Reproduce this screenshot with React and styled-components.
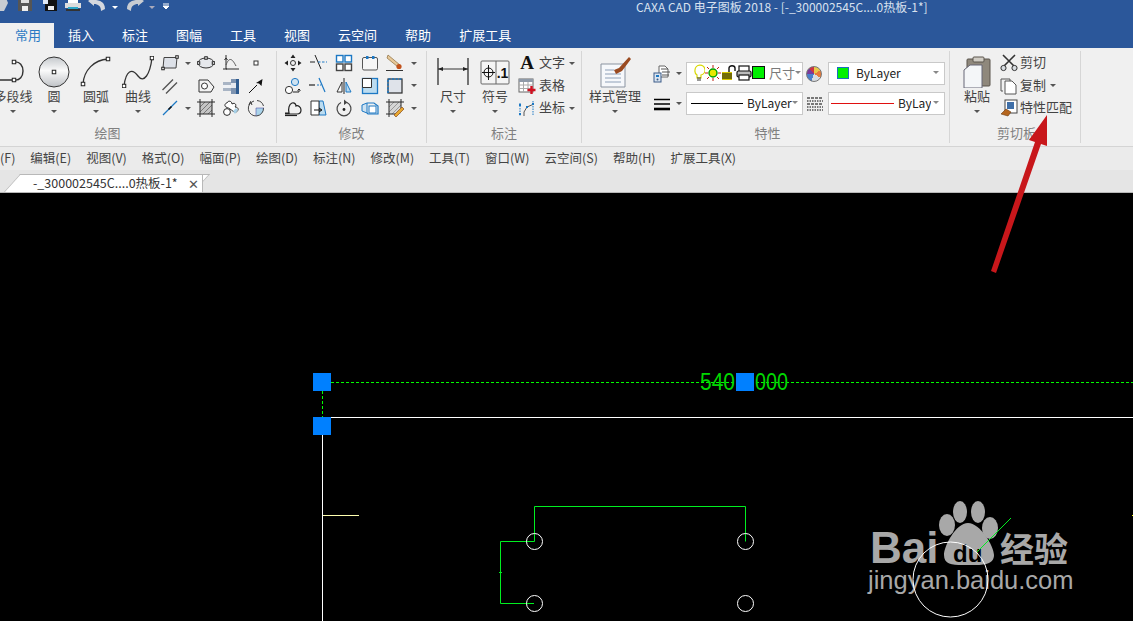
import React from 'react';
import styled, { createGlobalStyle } from 'styled-components';

const GlobalStyle = createGlobalStyle`
  html, body { margin: 0; padding: 0; background: #000; }
  body { font-family: "Noto Sans CJK SC", "Liberation Sans", sans-serif; }
`;

const Window = styled.div`
  position: relative;
  width: 1133px;
  height: 621px;
  overflow: hidden;
  display: flex;
  flex-direction: column;
`;

const TitleBar = styled.div`
  height: 23px;
  flex: none;
  background: #2b579a;
  display: flex;
  align-items: flex-start;
`;

const QuickAccess = styled.div`
  width: 170px;
  height: 11px;
  overflow: hidden;
  display: flex;
  align-items: flex-end;
`;

const QuickIcon = styled.svg`
  flex: none;
  margin-left: ${props => props.$ml}px;
`;

const Title = styled.div`
  margin-left: 466px;
  font-size: 12px;
  line-height: 14px;
  color: #d8e1ef;
  white-space: nowrap;
`;

const TabRow = styled.div`
  height: 25px;
  flex: none;
  background: #2b579a;
  display: flex;
`;

const RibbonTab = styled.div`
  padding: ${props => (props.$active ? '0 13px 0 15px' : '0 14px')};
  font-size: 13px;
  line-height: 23px;
  color: ${props => (props.$active ? '#2b7ac4' : '#fff')};
  background: ${props => (props.$active ? '#f0f0f0' : 'transparent')};
`;

const Ribbon = styled.div`
  height: 99px;
  flex: none;
  box-sizing: border-box;
  padding-top: 3px;
  background: #f0f0f0;
  border-bottom: 1px solid #d4d4d4;
  display: flex;
  align-items: flex-start;
`;

const Group = styled.div`
  flex: none;
  width: ${props => props.$w}px;
  margin-left: ${props => props.$ml || 0}px;
  height: 92px;
  box-sizing: border-box;
  border-right: 1px solid #d6d6d6;
  display: flex;
  flex-direction: column;
`;

const GroupBody = styled.div`
  height: 74px;
  display: flex;
  align-items: flex-start;
  padding-left: ${props => props.$pl || 0}px;
`;

const GroupLabel = styled.div`
  height: 16px;
  font-size: 13px;
  line-height: 16px;
  color: #808080;
  text-align: center;
  padding-left: ${props => props.$pl || 0}px;
  padding-right: ${props => props.$pr || 0}px;
`;

const BigButton = styled.div`
  flex: none;
  width: ${props => props.$w}px;
  padding-top: 5px;
  display: flex;
  flex-direction: column;
  align-items: center;
  overflow: visible;
`;

const BigIcon = styled.svg`
  display: block;
  flex: none;
`;

const BigLabel = styled.div`
  margin-top: 0;
  font-size: 13px;
  line-height: 16px;
  color: #444;
  white-space: nowrap;
`;

const Caret = styled.span`
  flex: none;
  display: block;
  width: 0;
  height: 0;
  border-left: 3px solid transparent;
  border-right: 3px solid transparent;
  border-top: 3px solid #555;
  margin-top: ${props => props.$mt || 0}px;
  margin-left: ${props => props.$ml || 0}px;
`;

const IconGrid = styled.div`
  flex: none;
  margin-top: 1px;
  display: grid;
  grid-template-columns: ${props => props.$cols};
  grid-auto-rows: 22.5px;
`;

const IconCell = styled.div`
  display: flex;
  align-items: center;
  justify-content: ${props => (props.$start ? 'flex-start' : 'center')};
  padding-left: ${props => props.$pl || 0}px;
`;

const SmallIcon = styled.svg`
  display: block;
  flex: none;
`;

const ActionList = styled.div`
  flex: none;
  margin-top: 1px;
  margin-left: ${props => props.$ml || 0}px;
  display: flex;
  flex-direction: column;
`;

const ActionRow = styled.div`
  height: 22.5px;
  display: flex;
  align-items: center;
  font-size: 13px;
  color: #444;
  white-space: nowrap;
`;

const ActionText = styled.span`
  margin-left: ${props => props.$ml || 1}px;
  margin-bottom: 3px;
`;

const PropRows = styled.div`
  flex: none;
  margin-top: 11px;
  margin-left: 13px;
  display: flex;
  flex-direction: column;
  gap: 7px;
`;

const PropRow = styled.div`
  height: 23px;
  display: flex;
  align-items: center;
`;

const Combo = styled.div`
  flex: none;
  width: 117px;
  height: 23px;
  box-sizing: border-box;
  border: 1px solid #c9c9c9;
  background: #fff;
  display: flex;
  align-items: center;
  padding: 0 4px 2px;
  padding-left: ${props => props.$pl || 4}px;
  font-size: 12px;
  color: #222;
  position: relative;
`;

const ComboCaret = styled(Caret)`
  margin-left: auto;
  margin-right: 1px;
  border-top-color: #888;
`;

const RowCaret = styled(Caret)`
  margin-left: 5px;
  margin-right: 4px;
`;

const LineSample = styled.span`
  flex: none;
  height: 1px;
  width: ${props => props.$w}px;
  background: ${props => props.$color};
  margin-right: 4px;
  margin-top: 2px;
`;

const ClippedText = styled.span`
  flex: none;
  display: block;
  width: ${props => props.$w}px;
  overflow: hidden;
  white-space: nowrap;
`;

const LayerName = styled(ClippedText)`
  margin-left: 4px;
  color: #7a7a7a;
  font-size: 13px;
`;

const ColorSwatch = styled.span`
  flex: none;
  width: 12px;
  height: 12px;
  background: #00f000;
  border: 1px solid #1a6fc0;
  box-sizing: border-box;
  margin: 0 7px 0 4px;
`;

const Wheel = styled.div`
  flex: none;
  width: 16px;
  height: 16px;
  margin: 0 6px 0 3px;
  border-radius: 50%;
  border: 1px solid #777;
  box-sizing: border-box;
  background: conic-gradient(#e8c84a 0 60deg, #e87a3a 60deg 120deg, #d8dce0 120deg 200deg, #4a7fcc 200deg 270deg, #7a3a9a 270deg 320deg, #cc3344 320deg 360deg);
`;

const LinetypeCell = styled.div`
  flex: none;
  width: 25px;
  box-sizing: border-box;
  padding-left: 3px;
  display: flex;
  align-items: center;
`;

const MenuBar = styled.div`
  height: 23px;
  flex: none;
  box-sizing: border-box;
  padding-bottom: 3px;
  background: #ebebeb;
  display: flex;
  align-items: center;
  gap: 15px;
  margin-left: -25px;
  font-size: 12.5px;
  color: #444;
  white-space: nowrap;
`;

const DocBar = styled.div`
  height: 23px;
  flex: none;
  box-sizing: border-box;
  background: #e5e5e5;
  border-bottom: 1px solid #b8b8b8;
  display: flex;
  align-items: flex-end;
  padding-left: 3px;
  overflow: hidden;
`;

const DocTab = styled.div`
  position: relative;
  width: 200px;
  height: 19px;
  margin-bottom: -1px;
  box-sizing: border-box;
  padding-left: 30px;
  padding-bottom: 3px;
  display: flex;
  align-items: center;
  font-size: 12.5px;
  color: #333;
  white-space: nowrap;
  z-index: 0;
  &::before {
    content: '';
    position: absolute;
    inset: 0;
    right: 10px;
    background: #fff;
    border: 1px solid #b8b8b8;
    border-bottom: none;
    transform: skewX(-42deg);
    transform-origin: bottom left;
    z-index: -1;
  }
  &::after {
    content: '';
    position: absolute;
    top: 0;
    bottom: 0;
    right: 0;
    width: 60px;
    background: #fff;
    border: 1px solid #b8b8b8;
    border-left: none;
    border-bottom: none;
    z-index: -1;
  }
`;

const DocClose = styled.span`
  margin-left: auto;
  margin-right: 4px;
  margin-top: 3px;
  font-size: 13px;
  line-height: 1;
  color: #555;
`;

const Canvas = styled.div`
  position: relative;
  flex: 1;
  background: #000;
`;

const Drawing = styled.svg`
  display: block;
  width: 1133px;
  height: 428px;
`;

const ArrowOverlay = styled.svg`
  position: absolute;
  left: 980px;
  top: 105px;
  pointer-events: none;
`;

const sq = (x, y, s = 3.5) => <rect x={x - s / 2} y={y - s / 2} width={s} height={s} fill="#fff" stroke="#222" />;
const BLUE = '#1c78c4';
const DARK = '#2a2a2a';

const glyphs = {
  rect: <><path d="M3 3.5H16L15 14H2Z" fill="#dde1e8" stroke="#444" />{sq(16, 3, 2.5)}{sq(2, 14.5, 2.5)}</>,
  ellipse: <><ellipse cx="9" cy="9" rx="8" ry="5" fill="#e6e8ec" stroke="#333" />{sq(9, 4, 2.5)}{sq(1.5, 9, 2.5)}{sq(16.5, 9, 2.5)}</>,
  axes: <><path d="M4 1V15H17M1 15H5M4 4L2.5 6M4 4L5.5 6" fill="none" stroke={DARK} /><path d="M4 11C7 3 10 4 14 12" fill="none" stroke="#555" /></>,
  point: <rect x="7" y="7" width="4" height="4" fill="#fff" stroke="#333" />,
  parallel: <path d="M1.5 13L12 2.5M5 16.5L16 5.5" stroke="#555" strokeWidth="1.4" fill="none" />,
  poly: <><path d="M2 3H11L17 10L14 15H2Z" fill="#f3f3f3" stroke="#333" /><circle cx="7.5" cy="9" r="3" fill="#fff" stroke="#333" /></>,
  shaft: <><rect x="1" y="5" width="8" height="9" fill="#a8b4c4" /><rect x="1" y="8" width="8" height="3" fill="#eef1f5" /><rect x="9" y="2" width="8" height="15" fill="#7d93b0" /><rect x="9" y="6" width="8" height="5" fill="#e5e9ef" /><rect x="14" y="2" width="3" height="15" fill="#2f5c90" /></>,
  pin: <><path d="M2 16L10 8" stroke="#111" /><path d="M15.5 2L14.5 9L12 6.5L9 6Z" fill="#111" /></>,
  axisline: <><path d="M2 16L16 2" stroke={BLUE} strokeWidth="1.3" /><path d="M7.5 10.5L10.5 7.5" stroke="#111" strokeWidth="1.6" /></>,
  hatch: <><rect x="3" y="3" width="12" height="12" fill="#c4c4c4" stroke="none" /><path d="M3 8L8 3M3 13L13 3M6 15L15 6M11 15L15 11" stroke="#777" /><path d="M0 3H18M0 15H18M3 0V18M15 0V18" stroke={DARK} /></>,
  cloud: <><path d="M5 4C6 1 10 2 10 5C13 3 15 6 13 8C17 8 17 12 14 13C12 14 10 11 8 10C7 9 6 9 4 8C2 7 3 4 5 4Z" fill="#fff" stroke={DARK} /><circle cx="5" cy="13" r="3.4" fill="#fff" stroke={DARK} /><path d="M11 12L14 9L16 11L13 15Z" fill="#a9d3ea" /></>,
  wheel: <><path d="M9 9V17A8 8 0 0 0 17 9Z" fill="#a9d3ea" /><path d="M7 2A7.6 7.6 0 1 0 16.5 9M10 1.5A7.6 7.6 0 0 1 16.5 7" fill="none" stroke="#444" /><path d="M9 9H17M9 9V17" stroke="#55a" strokeWidth=".6" /><path d="M2 6L3.5 2.5L5 6" fill="none" stroke="#333" /></>,
  move: <><circle cx="9" cy="9" r="2.5" fill="none" stroke="#333" /><path d="M9 0.5L11.5 4H6.5ZM9 17.5L11.5 14H6.5ZM0.5 9L4 6.5V11.5ZM17.5 9L14 6.5V11.5Z" fill="#222" /></>,
  trim: <><path d="M1 8H6M6 1L12 15" stroke="#222" fill="none" /><path d="M9 8H18" stroke={BLUE} strokeDasharray="2.5 1.5" /></>,
  array: <g fill="#fff" stroke={BLUE} strokeWidth="1.4"><rect x="1.5" y="1.5" width="6.5" height="6.5" /><rect x="10" y="1.5" width="6.5" height="6.5" /><rect x="1.5" y="10" width="6.5" height="6.5" stroke="#444" /><rect x="10" y="10" width="6.5" height="6.5" stroke="#444" /></g>,
  board: <><rect x="1.5" y="3.5" width="15" height="12.5" rx="1.5" fill="#f6f6f6" stroke="#555" /><rect x="5" y="2" width="2.5" height="3" fill={BLUE} /><rect x="11" y="2" width="2.5" height="3" fill={BLUE} /></>,
  brush: <><path d="M2 1L14 11L12 13L1 4Z" fill="#e7c99a" stroke="#8a6a3a" strokeWidth=".7" /><circle cx="13" cy="12.5" r="2.6" fill="#c2521c" /><path d="M0 16.5H17" stroke="#333" /></>,
  offset: <><circle cx="11" cy="5" r="3.6" fill="#cfe3f2" stroke={BLUE} /><circle cx="5" cy="13" r="3.6" fill="#fff" stroke="#333" /><path d="M9 15H15V12M13.5 13.5L15 12L16.5 13.5" fill="none" stroke="#222" /></>,
  extend: <><path d="M0 8H6" stroke="#222" strokeWidth="1.2" /><path d="M8 8H12" stroke={BLUE} strokeDasharray="2 1" /><path d="M10 1L16 15" stroke={BLUE} strokeWidth="1.2" /></>,
  mirror: <><path d="M9 1V17" stroke="#222" /><path d="M7 5V15H2Z" fill="#fff" stroke="#333" /><path d="M11 5V15H16Z" fill="#b9daf0" stroke={BLUE} /></>,
  copyrect: <><rect x="1.5" y="1.5" width="15" height="15" fill="#bcdcf0" stroke={BLUE} strokeWidth="1.3" /><path d="M1.5 10.5H10.5V1.5H1.5Z" fill="#fff" stroke="#333" /></>,
  dashrect: <><rect x="2" y="2" width="14" height="14" fill="#dfe3ea" stroke={DARK} strokeWidth="1.2" /><path d="M2 16V2H16" fill="none" stroke={BLUE} strokeWidth="1.6" strokeDasharray="2.2 1.4" /></>,
  blob: <><path d="M1 14H5C4 10 5 5 8 4C11 3 12 6 12 7C14 6 17 8 17 11C17 14 15 15 13 15H1" fill="none" stroke="#222" strokeWidth="1.2" /><path d="M1 16.5H13" stroke="#222" strokeWidth="1.2" /></>,
  trap: <><path d="M10 2H14L17 16H10Z" fill="#bcdcf0" stroke={BLUE} /><path d="M2 2H10V16H2Z" fill="#fff" stroke="#333" /><path d="M5 11H12M10 9L13 11L10 13" fill="none" stroke="#111" /></>,
  rotate: <><path d="M6 3.5A7 7 0 1 0 12 3.5" fill="none" stroke="#444" strokeWidth="1.2" /><path d="M9 0.5L12.5 3.5L9 6Z" fill="#444" /><circle cx="9" cy="10.5" r="1.4" fill="#222" /></>,
  cubes: <><path d="M1 6L6 4V14L1 12Z" fill="#cfe3f2" stroke={BLUE} /><path d="M6 4H13L17 7V15H7L6 14" fill="none" stroke={BLUE} strokeWidth="1.2" /><rect x="8" y="7" width="7" height="7" fill="#fff" stroke={BLUE} /></>,
  hatchpen: <><rect x="3" y="3" width="12" height="12" fill="#d6d6d6" /><path d="M3 8L8 3M3 13L13 3M6 15L15 6" stroke="#999" /><path d="M0 3H18M3 0V18M0 15H10M15 0V9" stroke={DARK} /><path d="M8 16L16 8L18 10L10 18Z" fill="#e8a830" stroke="#8a4a1a" strokeWidth=".7" /></>,
  text: <text x="9" y="15" fontFamily="Liberation Serif, serif" fontSize="19" fontWeight="700" textAnchor="middle" fill="#111">A</text>,
  table: <><rect x="1" y="2" width="14" height="13" fill="#fff" stroke="#666" /><rect x="1" y="2" width="14" height="3" fill="#8f9aa8" /><path d="M1 8H15M1 11.5H15M5.5 5V15M10 5V15" stroke="#aaa" /><path d="M13.5 9V17M9.5 13H17.5" stroke="#d01020" strokeWidth="2.4" /></>,
  coord: <><path d="M6 13L9 8L16 5M6 13V17" stroke="#555" fill="none" /><g fill="none" stroke={BLUE} strokeDasharray="1.5 1"><path d="M2 4V17M15 2V16" /></g><rect x="1" y="5" width="2" height="2" fill={BLUE} /><rect x="1" y="14" width="2" height="2" fill={BLUE} /><rect x="14" y="4" width="2" height="2" fill={BLUE} /><rect x="8" y="7" width="2" height="2" fill={BLUE} /></>,
  cut: <><path d="M3 1L15 13M15 1L3 13" stroke="#333" strokeWidth="1.6" /><circle cx="3.5" cy="14" r="2.6" fill="#d8dde2" stroke="#333" /><circle cx="14.5" cy="14" r="2.6" fill="#d8dde2" stroke="#333" /></>,
  copy: <><path d="M3 14H1V2H10V4" fill="none" stroke="#555" /><path d="M5 4H12L16 8V17H5Z" fill="#fff" stroke="#555" /></>,
  match: <><rect x="5" y="1" width="12" height="13" fill="#fff" stroke="#444" /><rect x="7" y="3" width="7" height="7" fill="#3f6fa8" /><path d="M1 15L6 10L11 13L8 17Z" fill="#b5651d" stroke="#6a3a10" strokeWidth=".6" /></>,
  layers: <><path d="M6 1H12L15 4V12H6Z" fill="#fff" stroke="#666" /><path d="M8 4H15M9 7H17M9 10H16" stroke="#555" /><rect x="1" y="8" width="7" height="9" fill="#dbe5f0" stroke="#3a5a88" /><rect x="3" y="10" width="3" height="2" fill={BLUE} /><circle cx="4.5" cy="14.5" r="1" fill="#3a5a88" /></>,
  weight: <><path d="M1 4.5H17M1 9H17" stroke="#000" strokeWidth="1.4" /><path d="M1 14H17" stroke="#000" strokeWidth="2.6" /></>,
  linetype: <><path d="M1 3H17M1 9H17" stroke="#000" strokeDasharray="3 1" /><path d="M1 6H17M1 12H17M1 15H17" stroke="#000" strokeDasharray="1.5 1" /></>,
  bulb: <><path d="M4 6A5 5 0 1 1 10 11V14H6V11A5 5 0 0 1 4 6Z" fill="#fff" stroke="#d8d800" strokeWidth="1.2" /><path d="M6 14H10M6 16H10" stroke="#333" /></>,
  sun: <><circle cx="8" cy="8" r="4" fill="#e8e800" stroke="#00a000" strokeWidth="1.4" /><path d="M8 0V3M8 13V16M0 8H3M13 8H16M2 2L4 4M12 12L14 14M14 2L12 4M4 12L2 14" stroke="#c02010" /></>,
  lock: <><rect x="1" y="7" width="10" height="8" fill="#d8c800" /><path d="M1 9H11M1 11H11M1 13H11" stroke="#111" /><path d="M8 7V3C8 0 14 0 14 3V6" fill="none" stroke="#111" strokeWidth="1.4" /></>,
  printer: <><rect x="3" y="1" width="10" height="6" fill="#fff" stroke="#111" strokeWidth="1.2" /><rect x="1" y="6" width="14" height="6" rx="1.5" fill="#bbb" stroke="#111" strokeWidth="1.2" /><rect x="3" y="10" width="10" height="5" fill="#fff" stroke="#111" strokeWidth="1.2" /></>,
  green: <rect x="0.5" y="1.5" width="12" height="12" fill="#00f000" stroke="#111" />,
};

const Ico = ({ name, w = 18, h = 18 }) => (
  <SmallIcon width={w} height={h} viewBox={`0 0 ${w} ${h}`}>{glyphs[name]}</SmallIcon>
);

const Cell = ({ name, caret, pl, gap }) => (
  <IconCell $start={caret} $pl={pl}>
    <Ico name={name} />
    {caret && <Caret $ml={gap} />}
  </IconCell>
);

const Big = ({ w, label, iconW = 32, children }) => (
  <BigButton $w={w}>
    <BigIcon width={iconW} height="32" viewBox={`0 0 ${iconW} 32`}>{children}</BigIcon>
    <BigLabel>{label}</BigLabel>
    <Caret $mt={6} />
  </BigButton>
);

const Action = ({ name, text, caret, ml, textMl }) => (
  <ActionRow>
    <Ico name={name} />
    <ActionText $ml={textMl}>{text}</ActionText>
    {caret && <Caret $ml={ml || 4} />}
  </ActionRow>
);

const ribbonTabs = ['插入', '标注', '图幅', '工具', '视图', '云空间', '帮助', '扩展工具'];
const menus = ['文件(F)', '编辑(E)', '视图(V)', '格式(O)', '幅面(P)', '绘图(D)', '标注(N)', '修改(M)', '工具(T)', '窗口(W)', '云空间(S)', '帮助(H)', '扩展工具(X)'];

const App = () => (
  <Window>
    <GlobalStyle />
    <TitleBar>
      <QuickAccess>
        <QuickIcon $ml={-6} width="14" height="16"><path d="M0 8L4 3H12L14 8L10 16H0Z" fill="#c8ccd2" /></QuickIcon>
        <QuickIcon $ml={10} width="14" height="16"><rect width="14" height="16" fill="#555" /><rect x="3" y="0" width="8" height="8" fill="#ddd" /><rect x="4" y="11" width="6" height="5" fill="#eee" /></QuickIcon>
        <QuickIcon $ml={11} width="14" height="16"><rect x="2" width="12" height="16" fill="#111" /><rect x="0" width="5" height="9" fill="#dfe8f5" /><rect x="5" y="11" width="6" height="4" fill="#eee" /></QuickIcon>
        <QuickIcon $ml={8} width="16" height="16"><rect x="3" width="10" height="8" fill="#fff" /><rect y="8" width="16" height="5" fill="#ddd" /><rect x="3" y="12" width="10" height="2" fill="#2ea8c8" /><rect x="1" y="14" width="14" height="2" fill="#333" /></QuickIcon>
        <QuickIcon $ml={7} width="17" height="16"><path d="M0 6L6 2V5C12 5 17 7 17 14L13 16C13 11 10 9 6 9V11Z" fill="#d5d8de" /></QuickIcon>
        <Caret $ml={7} style={{ borderTopColor: '#fff', marginBottom: 2 }} />
        <QuickIcon $ml={9} width="17" height="16"><path d="M17 6L11 2V5C5 5 0 7 0 14L4 16C4 11 7 9 11 9V11Z" fill="#c8ccd2" /></QuickIcon>
        <Caret $ml={5} style={{ borderTopColor: '#aab', marginBottom: 2 }} />
        <QuickIcon $ml={8} width="6" height="8"><path d="M0 1H6M0 3L3 6L6 3Z" stroke="#fff" fill="#fff" /></QuickIcon>
      </QuickAccess>
      <Title>CAXA CAD 电子图板 2018 - [-_300002545C....0热板-1*]</Title>
    </TitleBar>

    <TabRow>
      <RibbonTab $active>常用</RibbonTab>
      {ribbonTabs.map(t => <RibbonTab key={t}>{t}</RibbonTab>)}
    </TabRow>

    <Ribbon>
      <Group $w={284} $ml={-7}>
        <GroupBody>
          <Big w={40} label="多段线" iconW={40}>
            <path d="M0 24H21M21 6C33 4 33 26 21 24" fill="none" stroke="#333" strokeWidth="1.4" />
            {sq(21, 6)}{sq(21, 24)}
          </Big>
          <Big w={42} label="圆">
            <defs>
              <linearGradient id="disc" x1="0" y1="0" x2="0" y2="1">
                <stop offset="0" stopColor="#c4c8cc" />
                <stop offset=".45" stopColor="#fafafa" />
                <stop offset="1" stopColor="#bfc2c6" />
              </linearGradient>
            </defs>
            <circle cx="16" cy="16" r="15" fill="url(#disc)" stroke="#333" />
            {sq(16, 16)}
          </Big>
          <Big w={42} label="圆弧">
            <path d="M3 28C4 14 14 4 28 3" fill="none" stroke="#333" strokeWidth="1.3" />
            {sq(3, 28)}{sq(28, 3)}
          </Big>
          <Big w={42} label="曲线">
            <path d="M2 30C4 14 10 12 16 20C22 28 28 18 30 2" fill="none" stroke="#333" strokeWidth="1.3" />
            {sq(2, 30)}{sq(30, 2)}
          </Big>
          <IconGrid $cols="34px 25px 26px 24px">
            <Cell name="rect" caret pl={2} gap={6} />
            <Cell name="ellipse" />
            <Cell name="axes" />
            <Cell name="point" />
            <IconCell $pl={2} $start><Ico name="parallel" /></IconCell>
            <Cell name="poly" />
            <Cell name="shaft" />
            <Cell name="pin" />
            <Cell name="axisline" caret pl={2} gap={6} />
            <Cell name="hatch" />
            <Cell name="cloud" />
            <Cell name="wheel" />
          </IconGrid>
        </GroupBody>
        <GroupLabel $pr={54}>绘图</GroupLabel>
      </Group>

      <Group $w={150}>
        <GroupBody $pl={4}>
          <IconGrid $cols="24px 26px 26px 26px 40px">
            <Cell name="move" />
            <Cell name="trim" />
            <Cell name="array" />
            <Cell name="board" />
            <Cell name="brush" caret pl={3} gap={7} />
            <Cell name="offset" />
            <Cell name="extend" />
            <Cell name="mirror" />
            <Cell name="copyrect" />
            <Cell name="dashrect" caret pl={3} gap={7} />
            <Cell name="blob" />
            <Cell name="trap" />
            <Cell name="rotate" />
            <Cell name="cubes" />
            <Cell name="hatchpen" caret pl={3} gap={7} />
          </IconGrid>
        </GroupBody>
        <GroupLabel>修改</GroupLabel>
      </Group>

      <Group $w={155}>
        <GroupBody $pl={5}>
          <Big w={42} label="尺寸" iconW={34}>
            <path d="M2 2V29M32 2V29" stroke="#555" strokeWidth="1.6" />
            <path d="M2 13H32" stroke="#333" />
            <path d="M2 13L7 11V15ZM32 13L27 11V15Z" fill="#222" />
          </Big>
          <Big w={42} label="符号">
            <rect x="2" y="5" width="28" height="23" rx="1" fill="#f4f4f4" stroke="#666" />
            <path d="M17 5V28" stroke="#666" />
            <circle cx="9.5" cy="16.5" r="4.5" fill="none" stroke="#111" />
            <path d="M3 16.5H16M9.5 9V24" stroke="#111" />
            <text x="23.5" y="22" fontSize="14" fontWeight="700" textAnchor="middle" fontFamily="Liberation Sans, sans-serif" fill="#111">.1</text>
          </Big>
          <ActionList $ml={2}>
            <Action name="text" text="文字" caret textMl={3} />
            <Action name="table" text="表格" textMl={3} />
            <Action name="coord" text="坐标" caret textMl={3} />
          </ActionList>
        </GroupBody>
        <GroupLabel>标注</GroupLabel>
      </Group>

      <Group $w={368}>
        <GroupBody $pl={8}>
          <Big w={50} label="样式管理" iconW={34}>
            <path d="M3 8H27V31H3Z" fill="#f6f8fb" stroke="#8a93a0" />
            <path d="M7 14H16M7 18H23M7 22H23M7 26H23" stroke="#8ea0b8" />
            <path d="M31 1L21 12L16 14L18 18L24 15L33 3Z" fill="#9a4a20" />
          </Big>
          <PropRows>
            <PropRow>
              <Ico name="layers" />
              <RowCaret />
              <Combo>
                <Ico name="bulb" w={14} h={18} />
                <Ico name="sun" w={16} h={16} />
                <Ico name="lock" w={15} h={16} />
                <Ico name="printer" w={16} h={16} />
                <Ico name="green" w={13} h={15} />
                <LayerName $w={26}>尺寸</LayerName>
                <ComboCaret />
              </Combo>
              <Wheel />
              <Combo>
                <ColorSwatch />
                ByLayer
                <ComboCaret />
              </Combo>
            </PropRow>
            <PropRow>
              <Ico name="weight" />
              <RowCaret />
              <Combo>
                <LineSample $w={52} $color="#000" />
                ByLayer
                <ComboCaret />
              </Combo>
              <LinetypeCell><Ico name="linetype" /></LinetypeCell>
              <Combo $pl={2}>
                <LineSample $w={63} $color="#e01010" />
                <ClippedText $w={33}>ByLayer</ClippedText>
                <ComboCaret />
              </Combo>
            </PropRow>
          </PropRows>
        </GroupBody>
        <GroupLabel $pl={4}>特性</GroupLabel>
      </Group>

      <Group $w={131}>
        <GroupBody $pl={7}>
          <Big w={40} label="粘贴" iconW={28}>
            <rect x="4" y="3" width="23" height="27" rx="1" fill="#8f887c" stroke="#5a554c" />
            <rect x="10" y="1" width="11" height="5" rx="1" fill="#d0ccc4" stroke="#5a554c" />
            <path d="M1 14L7 9H19V32H1Z" fill="#f4f6f8" stroke="#667" />
          </Big>
          <ActionList $ml={3}>
            <Action name="cut" text="剪切" textMl={2} />
            <Action name="copy" text="复制" caret textMl={2} />
            <Action name="match" text="特性匹配" textMl={2} />
          </ActionList>
        </GroupBody>
        <GroupLabel $pl={3}>剪切板</GroupLabel>
      </Group>
    </Ribbon>

    <MenuBar>
      {menus.map(m => <span key={m}>{m}</span>)}
    </MenuBar>

    <DocBar>
      <DocTab>
        -_300002545C....0热板-1*
        <DocClose>✕</DocClose>
      </DocTab>
    </DocBar>

    <Canvas>
      <Drawing viewBox="0 193 1133 428">
        <g fill="#a8a8a8">
          <text x="870" y="563" fontSize="44" fontWeight="700" fontFamily="Liberation Sans, sans-serif">Bai</text>
          <ellipse cx="960" cy="512" rx="7" ry="11" />
          <ellipse cx="978" cy="512" rx="7" ry="11" />
          <ellipse cx="947" cy="525" rx="8" ry="11" />
          <ellipse cx="990" cy="528" rx="8" ry="11" />
          <path d="M968 523C980 523 994 546 994 555C994 566 980 565 968 565C955 565 944 566 944 555C944 546 956 523 968 523Z" />
          <text x="953" y="562" fontSize="24" fontWeight="700" fontFamily="Liberation Sans, sans-serif" fill="#000">du</text>
          <text x="1000" y="562" fontSize="34" fontWeight="700" fontFamily="Noto Sans CJK SC, sans-serif">经验</text>
          <text x="868" y="589" fontSize="25.5" fontFamily="Liberation Sans, sans-serif">jingyan.baidu.com</text>
        </g>
        <path d="M331 382.5H1133M322.5 391V417" stroke="#00ff00" strokeDasharray="3 2" fill="none" />
        <path d="M331 417.5H1133M322.5 435V621" stroke="#fff" fill="none" />
        <path d="M323 515.5H359" stroke="#ffffb0" />
        <path d="M1132 515.5H1133" stroke="#ffff00" />
        <path d="M534.5 541.5V506.5H745.5V541.5M534.5 541.5H500.5V603.5H534M499 572.5H502" stroke="#00ee20" fill="none" />
        <g fill="none" stroke="#fff">
          <circle cx="534.5" cy="541.5" r="8" />
          <circle cx="745.5" cy="541.5" r="8" />
          <circle cx="534.5" cy="603.5" r="8" />
          <circle cx="745.5" cy="603.5" r="8" />
          <circle cx="950.5" cy="579.5" r="37.5" />
        </g>
        <path d="M977 552L1011 518" stroke="#00ee20" />
        <g fill="#00d800" fontSize="24" fontFamily="Liberation Sans, sans-serif">
          <text x="700" y="390" textLength="35" lengthAdjust="spacingAndGlyphs">540</text>
          <text x="755" y="390" textLength="33" lengthAdjust="spacingAndGlyphs">000</text>
        </g>
        <g fill="#0080ff">
          <rect x="313" y="373" width="18" height="18" />
          <rect x="313" y="417" width="18" height="18" />
          <rect x="736" y="373" width="18" height="18" />
        </g>
      </Drawing>
    </Canvas>

    <ArrowOverlay width="80" height="175" viewBox="980 105 80 175">
      <path d="M1047 115L1047 146L1041 144L996 273L991 271L1035 142L1029 140Z" fill="#c8171b" />
    </ArrowOverlay>
  </Window>
);

export default App;
